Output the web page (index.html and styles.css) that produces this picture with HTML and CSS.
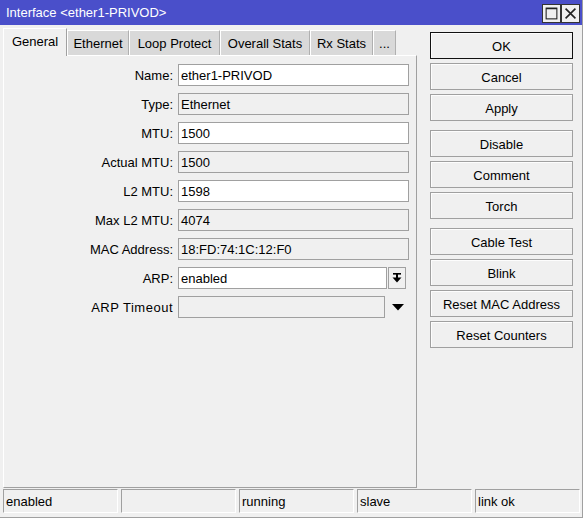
FILE: index.html
```
<!DOCTYPE html>
<html>
<head>
<meta charset="utf-8">
<title>Interface</title>
<link rel="stylesheet" href="styles.css">
</head>
<body>
<div class="window">
  <div class="titlebar">
    <span class="title">Interface &lt;ether1-PRIVOD&gt;</span>
    <div class="winbtns">
      <div class="winbtn">
        <svg width="19" height="19" viewBox="0 0 19 19"><rect x="3.5" y="3.5" width="12" height="12" fill="none" stroke="#222" stroke-width="1.2"/><line x1="3.5" y1="4" x2="15.5" y2="4" stroke="#222" stroke-width="1.5"/></svg>
      </div>
      <div class="winbtn">
        <svg width="19" height="19" viewBox="0 0 19 19"><path d="M4 4 L15 15 M15 4 L4 15" stroke="#222" stroke-width="1.8" fill="none"/></svg>
      </div>
    </div>
  </div>
  <div class="content">
    <div class="leftcol">
      <div class="tabs">
        <div class="tab active w-general">General</div>
        <div class="tab w-ethernet">Ethernet</div>
        <div class="tab w-loop">Loop Protect</div>
        <div class="tab w-overall">Overall Stats</div>
        <div class="tab w-rx">Rx Stats</div>
        <div class="tab w-more">...</div>
      </div>
      <div class="panel">
        <div class="form">
          <div class="label">Name:</div>
          <div class="field edit">ether1-PRIVOD</div>
          <div class="label">Type:</div>
          <div class="field ro">Ethernet</div>
          <div class="label">MTU:</div>
          <div class="field edit">1500</div>
          <div class="label">Actual MTU:</div>
          <div class="field ro">1500</div>
          <div class="label">L2 MTU:</div>
          <div class="field edit">1598</div>
          <div class="label">Max L2 MTU:</div>
          <div class="field ro">4074</div>
          <div class="label">MAC Address:</div>
          <div class="field ro">18:FD:74:1C:12:F0</div>
          <div class="label">ARP:</div>
          <div class="combo">
            <div class="field edit arp">enabled</div>
            <div class="dropbtn">
              <svg width="12" height="14" viewBox="0 0 12 14"><rect x="2" y="2" width="8" height="1.6" fill="#000"/><rect x="5" y="3" width="2" height="4" fill="#000"/><path d="M1.5 6.5 L10.5 6.5 L6 11.5 Z" fill="#000"/></svg>
            </div>
          </div>
          <div class="label wide">ARP Timeout</div>
          <div class="combo">
            <div class="field ro arpto"></div>
            <div class="tri">
              <svg width="12" height="7" viewBox="0 0 12 7"><path d="M0 0 L12 0 L6 6.5 Z" fill="#000"/></svg>
            </div>
          </div>
        </div>
      </div>
    </div>
    <div class="buttons">
      <div class="btn default">OK</div>
      <div class="btn">Cancel</div>
      <div class="btn">Apply</div>
      <div class="btn group">Disable</div>
      <div class="btn">Comment</div>
      <div class="btn">Torch</div>
      <div class="btn group">Cable Test</div>
      <div class="btn">Blink</div>
      <div class="btn">Reset MAC Address</div>
      <div class="btn">Reset Counters</div>
    </div>
  </div>
  <div class="statusbar">
    <div class="cell">enabled</div>
    <div class="cell"></div>
    <div class="cell">running</div>
    <div class="cell">slave</div>
    <div class="cell last">link ok</div>
  </div>
</div>
</body>
</html>
```
FILE: styles.css
```
* { box-sizing: border-box; }
html, body { margin: 0; padding: 0; }
body {
  font-family: "Liberation Sans", Arial, sans-serif;
  font-size: 13px;
  color: #000;
  background: #f0f0f0;
}
.window {
  width: 583px;
  height: 518px;
  display: flex;
  flex-direction: column;
  background: #f0f0f0;
  border-right: 1px solid #a0a0a0;
  border-bottom: 1px solid #a0a0a0;
}
.titlebar {
  height: 25px;
  flex: none;
  background: #4a4fca;
  color: #fff;
  display: flex;
  align-items: center;
  justify-content: space-between;
  padding-left: 6px;
  padding-right: 2px;
}
.title { line-height: 25px; }
.winbtns { display: flex; align-self: flex-start; margin-top: 4px; }
.winbtn {
  width: 19px;
  height: 19px;
  background: #f0f0f0;
  border: 1px solid #333;
  display: flex;
  align-items: center;
  justify-content: center;
}
.winbtn svg { display: block; }
.content {
  height: 463px;
  flex: none;
  display: flex;
}
.leftcol {
  width: 414px;
  margin-left: 3px;
  display: flex;
  flex-direction: column;
}
.tabs {
  height: 30px;
  display: flex;
  align-items: flex-end;
  flex: none;
}
.tab {
  height: 25px;
  background: #d9d9d9;
  border-top: 1px solid #fff;
  border-left: 1px solid #fff;
  border-right: 1px solid #b0b0b0;
  display: flex;
  align-items: center;
  justify-content: center;
  white-space: nowrap;
  padding-top: 1px;
}
.tab.active {
  height: 28px;
  background: #f0f0f0;
  border-right: 1px solid #a0a0a0;
  margin-bottom: -1px;
  position: relative;
  z-index: 1;
  padding-top: 0;
  padding-bottom: 3px;
}
.w-general { width: 64px; }
.w-ethernet { width: 62px; }
.w-loop { width: 91px; }
.w-overall { width: 90px; }
.w-rx { width: 63px; }
.w-more { width: 23px; }
.panel {
  flex: 1;
  border-top: 1px solid #fff;
  border-left: 1px solid #fff;
  border-right: 1px solid #a0a0a0;
  border-bottom: 1px solid #a0a0a0;
}
.form {
  display: grid;
  grid-template-columns: 169px 231px;
  column-gap: 5px;
  row-gap: 7px;
  padding-top: 8px;
}
.label {
  text-align: right;
  align-self: center;
  white-space: nowrap;
}
.label.wide { letter-spacing: 0.5px; }
.field {
  height: 22px;
  border: 1px solid #a0a0a0;
  padding-left: 2px;
  display: flex;
  align-items: center;
  white-space: nowrap;
}
.field.edit { background: #fff; }
.field.ro { background: #f0f0f0; }
.combo { display: flex; align-items: center; }
.field.arp { width: 209px; }
.dropbtn {
  width: 18px;
  height: 22px;
  margin-left: 1px;
  border: 1px solid #a0a0a0;
  background: #f0f0f0;
  display: flex;
  align-items: center;
  justify-content: center;
}
.dropbtn svg, .tri svg { display: block; }
.field.arpto { width: 208px; }
.tri {
  width: 24px;
  display: flex;
  justify-content: center;
  padding-left: 2px;
}
.buttons {
  width: 143px;
  margin-left: 13px;
  margin-top: 7px;
  display: flex;
  flex-direction: column;
  gap: 4px;
}
.btn {
  height: 27px;
  border: 1px solid #a0a0a0;
  box-shadow: inset 1px 1px 0 #fdfdfd;
  background: #f0f0f0;
  display: flex;
  align-items: center;
  justify-content: center;
  white-space: nowrap;
  padding-top: 1px;
}
.btn.default { border-color: #111; }
.btn.group { margin-top: 5px; }
.statusbar {
  height: 24px;
  margin-top: 1px;
  display: flex;
  gap: 3px;
  padding-left: 3px;
  padding-right: 2px;
  flex: none;
}
.cell {
  width: 115px;
  border-top: 1px solid #a0a0a0;
  border-left: 1px solid #a0a0a0;
  border-bottom: 1px solid #fff;
  border-right: 1px solid #fff;
  padding-left: 2px;
  padding-top: 1px;
  display: flex;
  align-items: center;
  white-space: nowrap;
}
.cell.last { flex: 1; width: auto; }
```
